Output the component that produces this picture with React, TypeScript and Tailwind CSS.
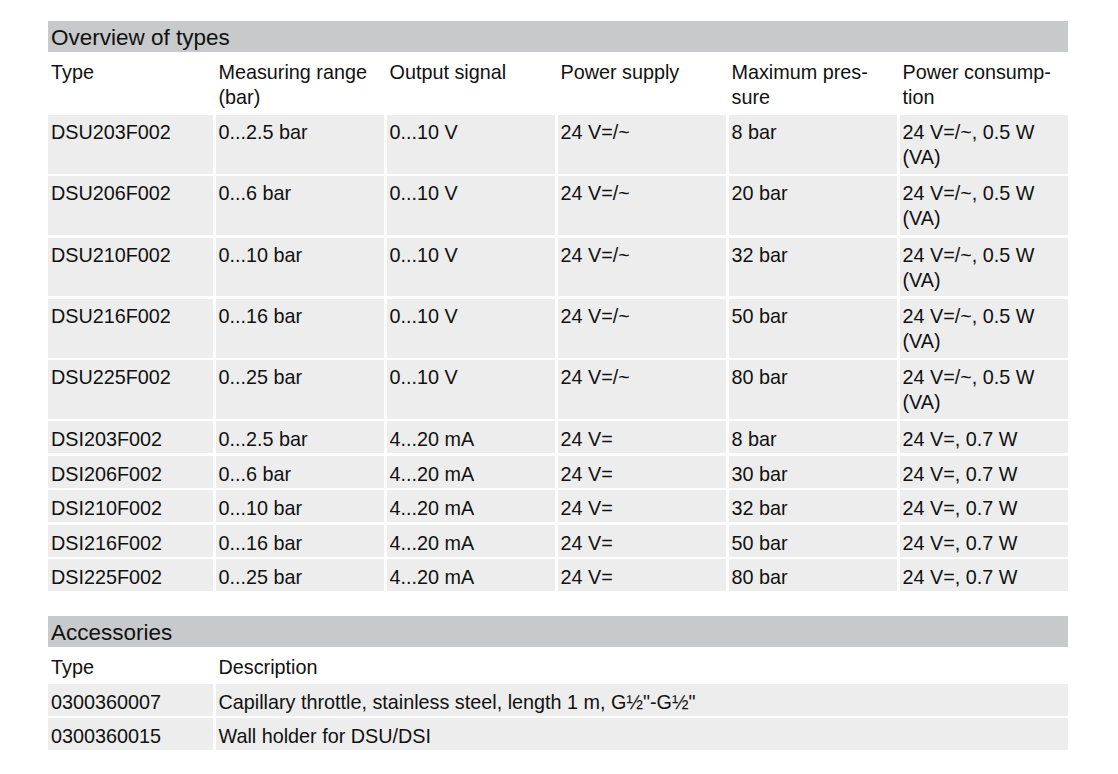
import React from "react";

const font = { fontFamily: '"Liberation Sans", Arial, sans-serif' };

const dsu: string[][] = [
  ["DSU203F002", "0...2.5 bar", "0...10 V", "24 V=/~", "8 bar"],
  ["DSU206F002", "0...6 bar", "0...10 V", "24 V=/~", "20 bar"],
  ["DSU210F002", "0...10 bar", "0...10 V", "24 V=/~", "32 bar"],
  ["DSU216F002", "0...16 bar", "0...10 V", "24 V=/~", "50 bar"],
  ["DSU225F002", "0...25 bar", "0...10 V", "24 V=/~", "80 bar"],
];

const dsi: string[][] = [
  ["DSI203F002", "0...2.5 bar", "4...20 mA", "24 V=", "8 bar", "24 V=, 0.7 W"],
  ["DSI206F002", "0...6 bar", "4...20 mA", "24 V=", "30 bar", "24 V=, 0.7 W"],
  ["DSI210F002", "0...10 bar", "4...20 mA", "24 V=", "32 bar", "24 V=, 0.7 W"],
  ["DSI216F002", "0...16 bar", "4...20 mA", "24 V=", "50 bar", "24 V=, 0.7 W"],
  ["DSI225F002", "0...25 bar", "4...20 mA", "24 V=", "80 bar", "24 V=, 0.7 W"],
];

const cols = "grid grid-cols-[165px_repeat(5,1fr)] gap-x-[2.5px]";

export default function App() {
  return (
    <div
      className="w-[1118px] h-[774px] bg-white text-[#111] pt-[21px] pl-[48px]"
      style={font}
    >
      <div className="w-[1020px] flex flex-col">
        {/* Overview */}
        <div className="h-[31px] bg-[#c8c9cb] flex items-center pl-[3px] pt-[3px] text-[22.5px] leading-none">
          Overview of types
        </div>
        <div className={`${cols} h-[63px] pt-[7.5px] text-[19.8px] leading-[25px]`}>
          <div className="pl-[3px]">Type</div>
          <div className="pl-[3px]">
            Measuring range
            <br />
            (bar)
          </div>
          <div className="pl-[3px]">Output signal</div>
          <div className="pl-[3px]">Power supply</div>
          <div className="pl-[3px]">
            Maximum pres-
            <br />
            sure
          </div>
          <div className="pl-[3px]">
            Power consump-
            <br />
            tion
          </div>
        </div>
        <div className="flex flex-col gap-y-[2.5px] text-[19.8px] leading-[25px]">
          {dsu.map((r) => (
            <div key={r[0]} className={`${cols} h-[58.75px]`}>
              {r.map((c, i) => (
                <div key={i} className="bg-[#ededed] pl-[3px] pt-[5px]">
                  {c}
                </div>
              ))}
              <div className="bg-[#ededed] pl-[3px] pt-[5px]">
                24 V=/~, 0.5 W
                <br />
                (VA)
              </div>
            </div>
          ))}
          {dsi.map((r) => (
            <div key={r[0]} className={`${cols} h-[32px]`}>
              {r.map((c, i) => (
                <div key={i} className="bg-[#ededed] pl-[3px] pt-[6px]">
                  {c}
                </div>
              ))}
            </div>
          ))}
        </div>

        {/* Accessories */}
        <div className="mt-[25px] h-[31px] bg-[#c8c9cb] flex items-center pl-[3px] pt-[3px] text-[22.5px] leading-none">
          Accessories
        </div>
        <div className="grid grid-cols-[165px_1fr] gap-x-[2.5px] h-[37px] pt-[7.5px] text-[19.8px] leading-[25px]">
          <div className="pl-[3px]">Type</div>
          <div className="pl-[3px]">Description</div>
        </div>
        <div className="flex flex-col gap-y-[2px] text-[19.8px] leading-[25px]">
          {[
            ["0300360007", "Capillary throttle, stainless steel, length 1 m, G\u00bd\"-G\u00bd\""],
            ["0300360015", "Wall holder for DSU/DSI"],
          ].map((r) => (
            <div key={r[0]} className="grid grid-cols-[165px_1fr] gap-x-[2.5px] h-[32px]">
              <div className="bg-[#ededed] pl-[3px] pt-[6px]">{r[0]}</div>
              <div className="bg-[#ededed] pl-[3px] pt-[6px]">{r[1]}</div>
            </div>
          ))}
        </div>
      </div>
    </div>
  );
}
